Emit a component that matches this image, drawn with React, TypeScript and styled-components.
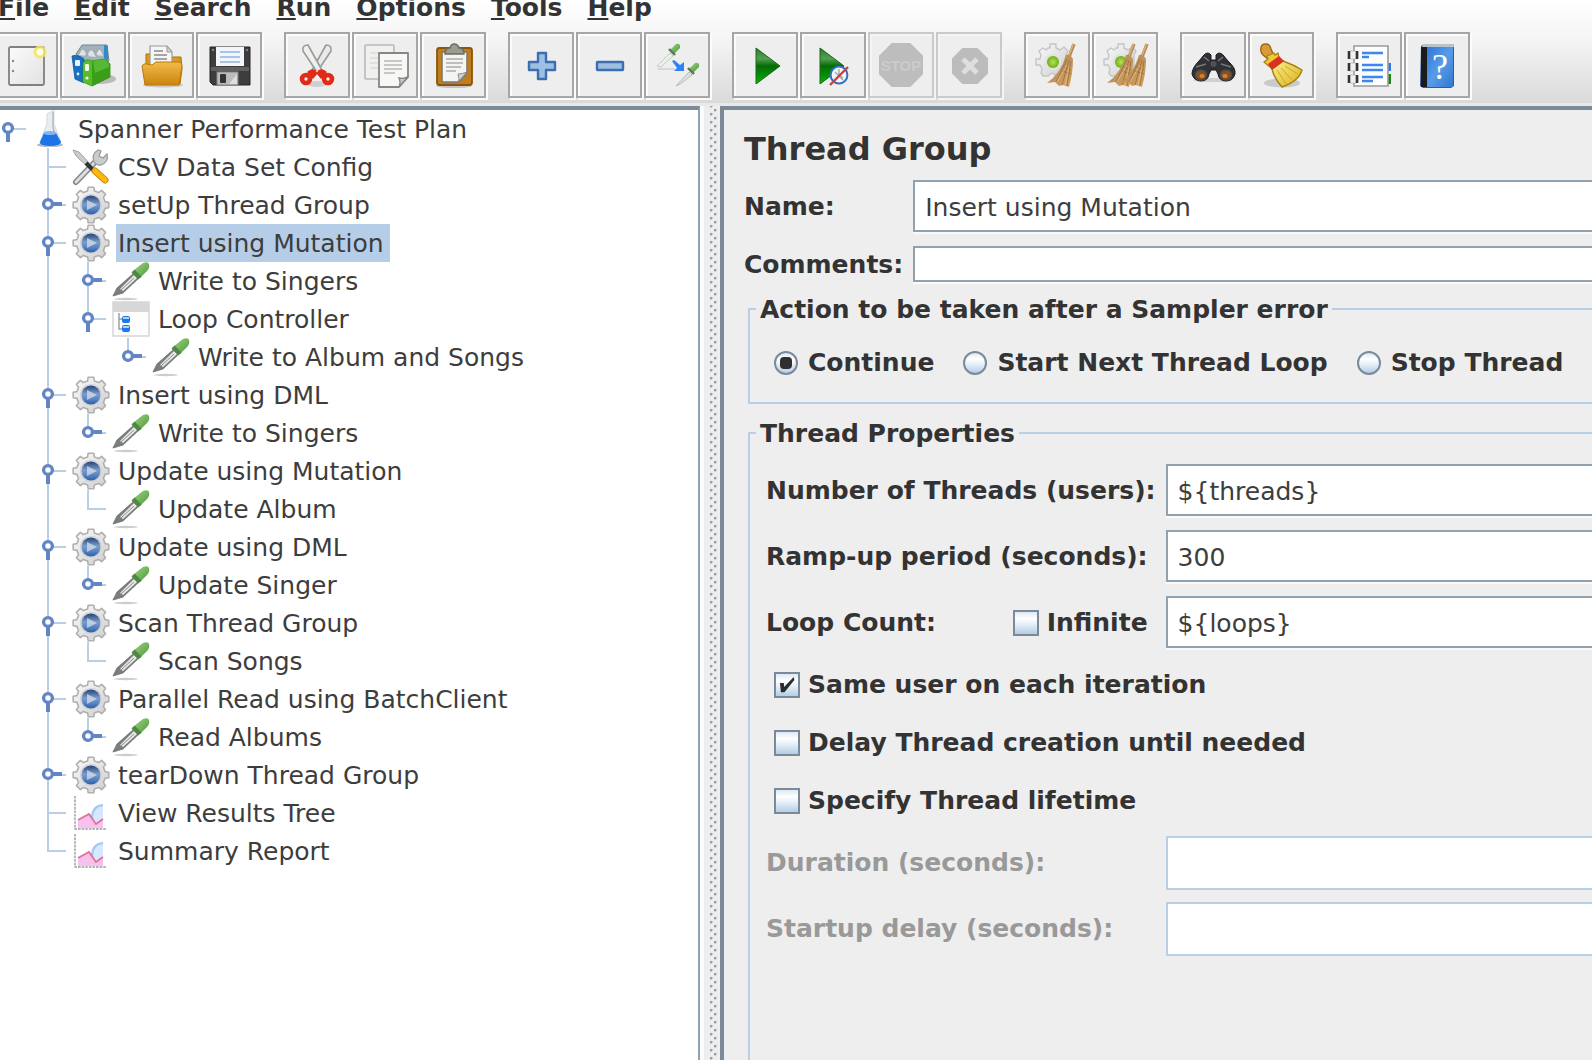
import React from "react";
import styled, { createGlobalStyle, css } from "styled-components";

const color = {
  text: "#333333",
  plain: "#3d3d3d",
  dim: "#999999",
  panel: "#eeeeee",
  edge: "#7a8a99",
  edgeSoft: "#90a1af",
  line: "#b8cfe5",
  handle: "#6385c4",
};

const GlobalStyle = createGlobalStyle`
  * { box-sizing: border-box; }
  body {
    margin: 0;
    background: ${color.panel};
    color: ${color.text};
    font-family: "DejaVu Sans", sans-serif;
    font-size: 25px;
  }
  button, input { font: inherit; color: inherit; }
`;

/* ---------- frame ---------- */

const Frame = styled.div`
  display: flex;
  flex-direction: column;
  height: 100vh;
  overflow: hidden;
`;

const Header = styled.header`
  background: linear-gradient(#ffffff, #f4f4f4 40%, #dadada 97%, #e9e9e9 97%);
`;

const MenuBar = styled.nav`
  display: flex;
  gap: 25px;
  height: 20px;
  margin-left: -2px;
`;

const MenuItem = styled.button`
  padding: 0;
  border: 0;
  background: none;
  font-weight: bold;
  line-height: 16px;
  height: 16px;
  white-space: nowrap;
`;

const Mnemonic = styled.span`
  text-decoration: underline;
  text-decoration-thickness: 2px;
  text-underline-offset: 2px;
`;

const ToolBar = styled.div`
  display: flex;
  gap: 22px;
  margin-left: -8px;
  padding: 12px 0 8px;
`;

const ToolGroup = styled.div`
  display: flex;
  gap: 2px;
`;

const ToolButton = styled.button`
  display: flex;
  align-items: center;
  justify-content: center;
  width: 66px;
  height: 66px;
  padding: 0;
  border: 2px solid #a6a6a6;
  background: ${color.panel};
  box-shadow: inset 2px 2px 0 #fbfbfb, 2px 2px 0 #fbfbfb;
  &:disabled {
    border-color: #cacaca;
    box-shadow: inset 2px 2px 0 #f4f4f4, 2px 2px 0 #f4f4f4;
  }
`;

const ToolSvg = styled.svg`
  width: 44px;
  height: 44px;
  overflow: visible;
`;

const Split = styled.main`
  display: flex;
  flex: 1;
  min-height: 0;
`;

const TreePane = styled.section`
  flex: 0 0 700px;
  overflow: hidden;
  background: #ffffff;
  border-top: 4px solid ${color.edge};
  border-right: 2px solid ${color.edgeSoft};
`;

const Splitter = styled.div`
  flex: 0 0 20px;
  border-left: 4px solid #fbfbfb;
  background-color: ${color.panel};
  background-image:
    radial-gradient(circle at 1px 1px, #93a0ab 1px, transparent 2px),
    radial-gradient(circle at 1px 1px, #93a0ab 1px, transparent 2px);
  background-size: 8px 8px;
  background-repeat: repeat-y;
  background-position: 6px 7px, 10px 11px;
`;

const FormPane = styled.section`
  display: flex;
  flex: 1;
  flex-direction: column;
  min-width: 0;
  overflow: hidden;
  padding: 20px 0 0 20px;
  border-top: 4px solid ${color.edge};
  border-left: 4px solid ${color.edge};
`;

/* ---------- tree ---------- */

const RootList = styled.ul`
  margin: 0;
  padding: 0;
  list-style: none;
`;

const Branch = styled.ul`
  margin: 0;
  padding: 0 0 0 40px;
  list-style: none;
  > li {
    background: linear-gradient(${color.line}, ${color.line}) 7px 0 / 2px 100% no-repeat;
  }
  > li:last-child {
    background-size: 2px 20px;
  }
`;

const Row = styled.div`
  display: flex;
  align-items: center;
  height: 38px;
  white-space: nowrap;
`;

const HandleSvg = styled.svg`
  flex: none;
  width: 32px;
  height: 38px;
`;

const NodeSvg = styled.svg`
  flex: none;
  width: 38px;
  height: 38px;
  margin-right: 6px;
  overflow: visible;
`;

const NodeLabel = styled.span<{ $selected?: boolean }>`
  padding: 2px 6px 0 2px;
  line-height: 36px;
  color: ${color.plain};
  background: ${(p) => (p.$selected ? "#b5cde6" : "transparent")};
`;

/* ---------- form ---------- */

const Title = styled.h1`
  margin: 0 0 12px;
  font-size: 32px;
  line-height: 38px;
`;

const HeadGrid = styled.div`
  display: grid;
  grid-template-columns: max-content 1fr;
  gap: 12px 10px;
  align-items: center;
`;

const FieldGrid = styled(HeadGrid)`
  padding: 16px 0 0 10px;
`;

const FieldLabel = styled.label<{ $dim?: boolean }>`
  font-weight: bold;
  line-height: 30px;
  white-space: nowrap;
  color: ${(p) => (p.$dim ? color.dim : color.text)};
`;

const TextInput = styled.input<{ $compact?: boolean }>`
  width: 100%;
  min-width: 0;
  height: ${(p) => (p.$compact ? "38px" : "54px")};
  padding: 2px 10px 0;
  border: 2px solid ${color.edgeSoft};
  border-right: 0;
  border-radius: 0;
  outline: 0;
  color: ${color.plain};
  background: #ffffff;
  &:enabled {
    height: ${(p) => (p.$compact ? "36px" : "52px")};
    margin-bottom: 2px;
    box-shadow: 0 2px 0 #fafafa;
  }
  &:disabled {
    border-color: ${color.line};
  }
`;

const Group = styled.fieldset<{ $fill?: boolean }>`
  min-width: 0;
  margin: 10px 0 0 4px;
  padding: 0 0 0 6px;
  border: 2px solid ${color.line};
  border-right: 0;
  ${(p) =>
    p.$fill &&
    css`
      flex: 1;
      margin-top: 14px;
      border-bottom: 0;
    `}
`;

const Legend = styled.legend`
  padding: 2px 4px 0;
  font-weight: bold;
  line-height: 28px;
`;

const RadioRow = styled.div`
  display: flex;
  gap: 29px;
  height: 78px;
  padding-left: 18px;
  align-items: center;
  overflow: hidden;
`;

const Choice = styled.label<{ $gap: number }>`
  display: flex;
  flex: none;
  align-items: center;
  gap: ${(p) => p.$gap}px;
  font-weight: bold;
  line-height: 30px;
  white-space: nowrap;
`;

const toggleBase = css`
  display: grid;
  place-items: center;
  flex: none;
  margin: 0;
  appearance: none;
  border: 2px solid ${color.edge};
  background: linear-gradient(#dce9f5, #ffffff 30%, #e6eff8 55%, #b4cde6);
`;

const Radio = styled.input`
  ${toggleBase}
  width: 24px;
  height: 24px;
  border-radius: 50%;
  &:checked::before {
    content: "";
    width: 12px;
    height: 12px;
    border-radius: 4px;
    background: #2f2f2f;
  }
`;

const Check = styled.input`
  ${toggleBase}
  width: 26px;
  height: 26px;
  &:checked::before {
    content: "";
    width: 16px;
    height: 16px;
    background: #2b2b2b;
    clip-path: polygon(6% 38%, 30% 38%, 32% 62%, 92% 0, 96% 18%, 34% 96%, 12% 96%);
  }
`;

const CheckRow = styled.div`
  display: flex;
  grid-column: 1 / -1;
  align-items: center;
  height: 46px;
  padding-left: 8px;
`;

const LoopCell = styled.div`
  display: flex;
  justify-content: space-between;
  padding-right: 8px;
`;

/* ---------- drawings ---------- */

const Definitions = styled.svg`
  position: absolute;
  width: 0;
  height: 0;
`;

function Gradients() {
  return (
    <Definitions aria-hidden="true">
      <defs>
        <linearGradient id="g-metal" x1="0" y1="0" x2="1" y2="1">
          <stop offset="0" stopColor="#fbfbfb" />
          <stop offset="1" stopColor="#cdcdcd" />
        </linearGradient>
        <linearGradient id="g-paper" x1="0" y1="0" x2="1" y2="1">
          <stop offset="0" stopColor="#fbfbfb" />
          <stop offset="1" stopColor="#e2e2e4" />
        </linearGradient>
        <linearGradient id="g-ball" x1="0" y1="0" x2="0" y2="1">
          <stop offset="0" stopColor="#24447c" />
          <stop offset="0.45" stopColor="#7f9cc6" />
          <stop offset="0.7" stopColor="#5b87c4" />
          <stop offset="1" stopColor="#2f5fa6" />
        </linearGradient>
        <linearGradient id="g-play" x1="0" y1="0" x2="0" y2="1">
          <stop offset="0" stopColor="#2c7a2c" />
          <stop offset="0.3" stopColor="#4fa04f" />
          <stop offset="0.5" stopColor="#056b05" />
          <stop offset="1" stopColor="#06b406" />
        </linearGradient>
        <linearGradient id="g-folder" x1="0" y1="0" x2="0" y2="1">
          <stop offset="0" stopColor="#f3bb4a" />
          <stop offset="1" stopColor="#cc8410" />
        </linearGradient>
        <linearGradient id="g-gold" x1="0" y1="0" x2="1" y2="1">
          <stop offset="0" stopColor="#fdf08a" />
          <stop offset="1" stopColor="#d9b01c" />
        </linearGradient>
        <linearGradient id="g-straw" x1="0" y1="0" x2="1" y2="1">
          <stop offset="0" stopColor="#a98058" />
          <stop offset="1" stopColor="#d9a45e" />
        </linearGradient>
        <linearGradient id="g-green" x1="0" y1="0" x2="1" y2="1">
          <stop offset="0" stopColor="#9ad67c" />
          <stop offset="1" stopColor="#4f9440" />
        </linearGradient>
        <linearGradient id="g-book" x1="0" y1="0" x2="1" y2="1">
          <stop offset="0" stopColor="#2f78d8" />
          <stop offset="0.5" stopColor="#5a9be8" />
          <stop offset="1" stopColor="#2f78d0" />
        </linearGradient>
        <radialGradient id="g-lime">
          <stop offset="0" stopColor="#b4e35a" />
          <stop offset="1" stopColor="#6fae14" />
        </radialGradient>
      </defs>
    </Definitions>
  );
}

function gearPath(cx: number, cy: number, outer: number, inner: number, teeth: number) {
  const points: string[] = [];
  const step = (Math.PI * 2) / teeth;
  for (let i = 0; i < teeth; i++) {
    const mid = i * step - Math.PI / 2;
    const corners: [number, number][] = [
      [-0.3, inner],
      [-0.2, outer],
      [0.2, outer],
      [0.3, inner],
    ];
    corners.forEach(([turn, r]) => {
      const a = mid + turn * step;
      points.push(`${(cx + Math.cos(a) * r).toFixed(1)} ${(cy + Math.sin(a) * r).toFixed(1)}`);
    });
  }
  return `M${points.join("L")}Z`;
}

const octagon = (c: number, r: number) => {
  const k = r * 0.42;
  return `M${c - k} ${c - r}H${c + k}L${c + r} ${c - k}V${c + k}L${c + k} ${c + r}H${c - k}L${c - r} ${c + k}V${c - k}Z`;
};

const Broom = ({ x }: { x: number }) => (
  <g transform={`translate(${x} 0)`}>
    <path d="M39 1L34 14" stroke="#b18a58" strokeWidth="3.4" />
    <path d="M38.4 1L33.4 14" stroke="#dcb27a" strokeWidth="1.4" />
    <path d="M31 12Q35 11 38 16Q38 30 34 44L28 42L24 43L20 39L12 40Q26 30 31 12Z" fill="url(#g-straw)" />
    <path d="M32 16L21 39M34 17L27 42M36 18L32 43M29 24L36 27M27 28L36 31" stroke="#94703f" strokeWidth="0.8" fill="none" />
    <path d="M32 22L22 39M34 24L30 42" stroke="#e8c088" strokeWidth="0.8" fill="none" />
  </g>
);

const PaleGear = () => (
  <>
    <path
      d="M13 5L15 5V1H21V5L25 7L29 4L33 8L31 12V26L27 32H20L17 30L13 33H8L6 30L7 26L5 22H1V16H5L6 12L4 8L8 5L11 7Z"
      fill="url(#g-metal)"
      stroke="#c3c5c7"
      strokeWidth="1.4"
      strokeLinejoin="round"
    />
    <circle cx="18" cy="19" r="8" fill="#dfe2df" />
    <circle cx="18" cy="19" r="6" fill="url(#g-lime)" />
  </>
);

const toolIcons: Record<string, React.ReactNode> = {
  fresh: (
    <>
      <rect x="6" y="4" width="35" height="38" rx="1.5" fill="url(#g-paper)" stroke="#80807e" strokeWidth="1.8" />
      <circle cx="10" cy="18" r="1.2" fill="#888" />
      <circle cx="10" cy="28" r="1.2" fill="#888" />
      <circle cx="37" cy="9" r="6.5" fill="#f3e65a" opacity="0.85" />
      <circle cx="37" cy="9" r="3.4" fill="#fffef0" />
    </>
  ),
  templates: (
    <>
      <ellipse cx="30" cy="36" rx="15" ry="5" fill="#bbb" />
      <path d="M5 11L11 2H36L38 18L22 24Z" fill="#9fb2bd" stroke="#6f8898" strokeWidth="1" />
      <path d="M7 12Q12 -1 17 13M15 13Q20 -1 26 14M24 12Q29 -1 33 13" fill="#dfe3e6" stroke="#a3adb3" strokeWidth="2" />
      <path d="M33 2L37 3V18L33 15Z" fill="#2f8ad0" />
      <path d="M1 13Q5 11 10 14L13 16V40L4 36Z" fill="#1673c4" stroke="#0d5799" strokeWidth="0.8" />
      <rect x="4" y="17" width="5" height="6" rx="1" fill="#eaf4fb" />
      <path d="M12 20Q16 15 21 18L34 16L39 21V34L21 43L12 39Z" fill="#3da515" stroke="#2a7d0c" strokeWidth="0.8" />
      <path d="M21 18L34 16L39 21V34L21 43Z" fill="#3a9f18" />
      <path d="M22 18L34 16L38 21V24L24 30Z" fill="#55b934" />
      <path d="M12 20Q16 15 21 18V43L12 39Z" fill="#59bd2b" />
      <rect x="14" y="21" width="4" height="7" rx="1" fill="#f1fae9" />
      <circle cx="16" cy="35" r="1.6" fill="#e9f7df" />
      <circle cx="7" cy="31" r="1.4" fill="#dbeefb" />
    </>
  ),
  open: (
    <>
      <ellipse cx="24" cy="42" rx="20" ry="2.5" fill="#c9c9c9" />
      <path d="M7 11H13L15 14H42L43 26L41 41H7Z" fill="#d99a1e" stroke="#ad7207" strokeWidth="1" />
      <path d="M11 3H28L33 9V24H11Z" fill="#f5f5f5" stroke="#9a9a96" strokeWidth="1.2" />
      <path d="M28 3V9H33Z" fill="#d5d5d5" stroke="#9a9a96" strokeWidth="1" />
      <path d="M15 8H24M15 12H28M15 16H28" stroke="#8b8b8b" strokeWidth="1.3" />
      <path d="M3 23Q4 20 8 21L13 22L17 19H40Q43 19 43 23L40 42H6Z" fill="url(#g-folder)" stroke="#b87a0c" strokeWidth="1" />
    </>
  ),
  save: (
    <>
      <path d="M3 4H43V42H6L3 39Z" fill="#3d3d3d" stroke="#262626" strokeWidth="1" />
      <path d="M4 24H42V28H4Z" fill="#606060" />
      <rect x="9" y="4" width="28" height="19" fill="#f2f6fb" />
      <path d="M13 9H33M13 14H33M13 19H33" stroke="#a6c6e4" strokeWidth="1.8" />
      <rect x="10" y="29" width="21" height="13" fill="#bcbcbc" stroke="#858585" strokeWidth="1" />
      <rect x="13" y="31" width="6" height="9" rx="1" fill="#333" />
      <path d="M22 41L30 31V41Z" fill="#dedede" />
      <circle cx="6" cy="7" r="1" fill="#999" />
      <circle cx="40" cy="7" r="1" fill="#999" />
    </>
  ),
  cut: (
    <>
      <ellipse cx="22" cy="41" rx="10" ry="3" fill="#cfcfcf" />
      <path d="M31 2Q37 2 36 8L20 32L16 29Z" fill="#e9e9e7" stroke="#9a9c99" strokeWidth="1.6" strokeLinejoin="round" />
      <path d="M13 2Q7 2 8 8L24 32L28 29Z" fill="#f0f0ee" stroke="#9a9c99" strokeWidth="1.6" strokeLinejoin="round" />
      <path d="M12 29Q17 24 22 28Q27 24 32 29L26 36L22 31L18 36Z" fill="#de2a16" />
      <ellipse cx="11" cy="36" rx="4" ry="4" fill="#eee" stroke="#e22b16" strokeWidth="4.6" />
      <ellipse cx="33" cy="36" rx="4" ry="4" fill="#eee" stroke="#e22b16" strokeWidth="4.6" />
      <circle cx="22" cy="28" r="1.2" fill="#f7b9b0" />
    </>
  ),
  copy: (
    <>
      <rect x="2" y="2" width="29" height="34" rx="1" fill="#f0f0ee" stroke="#b9bab7" strokeWidth="1.6" />
      <path d="M7 10H26M7 15H26M7 20H26M7 25H20" stroke="#dadada" strokeWidth="1.5" />
      <path d="M16 10H45V34L36 44H16Z" fill="#f7f7f6" stroke="#858783" strokeWidth="1.8" strokeLinejoin="round" />
      <path d="M21 18H39M21 22H39M21 26H39M21 30H32" stroke="#b8b8b8" strokeWidth="1.5" />
      <path d="M45 34Q40 36 36 35Q38 40 36 44Z" fill="#c9c9c7" stroke="#858783" strokeWidth="1.4" />
    </>
  ),
  paste: (
    <>
      <ellipse cx="23" cy="43" rx="18" ry="2" fill="#c4c4c4" />
      <rect x="6" y="5" width="35" height="37" rx="2.5" fill="#c07d1c" stroke="#8a560b" strokeWidth="1.8" />
      <path d="M11 9H36V30L28 39H11Z" fill="#f4f4f2" stroke="#7d7a70" strokeWidth="1.6" />
      <path d="M36 29Q31 31 27 31Q29 36 27 39Z" fill="#d4d4d2" stroke="#8a8a88" strokeWidth="1" />
      <path d="M15 16H32M15 20H32M15 24H30M15 28H25" stroke="#aaaaaa" strokeWidth="1.5" />
      <path d="M14 11Q14 5 19 5Q20 1 23 1Q27 1 28 5Q33 5 33 11Z" fill="#9b9c90" stroke="#6b6c62" strokeWidth="1.4" />
    </>
  ),
  plus: (
    <path d="M19 10H27V19H36V27H27V36H19V27H10V19H19Z" fill="#9dbfe2" stroke="#3b6fb0" strokeWidth="2.4" strokeLinejoin="round" />
  ),
  minus: (
    <rect x="10" y="19" width="26" height="8" rx="0.5" fill="#9dbfe2" stroke="#3b6fb0" strokeWidth="2.4" strokeLinejoin="round" />
  ),
  toggle: (
    <>
      <path d="M2 23L15 10L18 13L6 24Z" fill="#eceeec" stroke="#c6c9c6" strokeWidth="1" />
      <path d="M3 26H20" stroke="#cdcdcd" strokeWidth="1.4" />
      <path d="M16 6L21 1Q26 0 25 5L20 10Q15 11 16 6Z" fill="url(#g-green)" />
      <path d="M14 6L20 12" stroke="#55794c" strokeWidth="2.4" />
      <path d="M21 43L34 29L37 32L25 41Z" fill="#dfe1df" stroke="#b7bab7" strokeWidth="1" />
      <path d="M35 25L40 20Q45 19 44 24L39 29Q34 30 35 25Z" fill="url(#g-green)" />
      <path d="M33 25L39 31" stroke="#55794c" strokeWidth="2.4" />
      <path d="M17 18L19 17L25 22L29 19V28H19L22 25Z" fill="#2f82f5" />
    </>
  ),
  start: <path d="M13 5L37 23L13 41Z" fill="url(#g-play)" stroke="#1c661c" strokeWidth="1" />,
  startNoPause: (
    <>
      <path d="M9 5L33 23L9 41Z" fill="url(#g-play)" stroke="#1c661c" strokeWidth="1" />
      <circle cx="28" cy="32" r="8.4" fill="#f2f5fa" stroke="#2f6fc0" strokeWidth="2" />
      <path d="M28 26V32L32 35M24 29L32 37" stroke="#9ab" strokeWidth="1.4" fill="none" />
      <path d="M19 42L37 24" stroke="#e0392c" strokeWidth="2.4" />
    </>
  ),
  stop: (
    <>
      <path d={octagon(22, 22)} fill="#bdbdbd" />
      <text x="22" y="28" textAnchor="middle" fontSize="15" fontWeight="bold" fontFamily="Liberation Sans, sans-serif" fill="#cbcbcb">
        STOP
      </text>
    </>
  ),
  shutdown: (
    <>
      <path d={octagon(23, 18)} fill="#bcbcbc" />
      <path d="M16 16L30 30M30 16L16 30" stroke="#dedede" strokeWidth="5" />
    </>
  ),
  clear: (
    <>
      <PaleGear />
      <Broom x={0} />
    </>
  ),
  clearAll: (
    <>
      <PaleGear />
      <Broom x={-8} />
      <Broom x={5} />
    </>
  ),
  search: (
    <>
      <ellipse cx="22" cy="37" rx="20" ry="2" fill="#cfcfcf" />
      <path d="M13 12Q17 8 20 12V17H25V12Q28 8 32 12L37 18Q45 25 44 31Q42 38 35 38Q28 38 27 31L25 27H20L18 31Q17 38 10 38Q3 38 1 31Q1 25 8 18Z" fill="#2f3134" stroke="#1b1b1d" strokeWidth="1" />
      <path d="M13 14L18 18M32 14L27 18M5 24L15 21M40 24L30 21" stroke="#73787d" strokeWidth="1.6" />
      <circle cx="22.5" cy="21" r="3" fill="#4e5358" />
      <ellipse cx="10" cy="32" rx="5.5" ry="5" fill="#8f4d18" stroke="#4a4d50" strokeWidth="1.6" />
      <ellipse cx="35" cy="32" rx="5.5" ry="5" fill="#8f4d18" stroke="#4a4d50" strokeWidth="1.6" />
      <ellipse cx="11" cy="33" rx="2.6" ry="2" fill="#cf8338" />
      <ellipse cx="34" cy="33" rx="2.6" ry="2" fill="#cf8338" />
    </>
  ),
  searchReset: (
    <>
      <ellipse cx="23" cy="40" rx="18" ry="4.5" fill="#c9c9c9" />
      <path d="M2 5Q2 1 7 1Q11 1 12 6L15 13L9 16L4 12Q1 9 2 5Z" fill="#d99a3c" stroke="#9d6a12" strokeWidth="1.4" />
      <path d="M5 19L9 16L8 13L15 10L16 12L19 10L20 15L12 25Z" fill="#efc93a" stroke="#a57f0b" strokeWidth="1.2" />
      <path d="M13 26L24 18Q35 22 43 27Q40 38 23 44Q15 35 13 26Z" fill="url(#g-gold)" stroke="#a5830f" strokeWidth="1.4" />
      <path d="M9 21L20 13L25 18L13 27Z" fill="#d93222" />
      <path d="M18 27L27 41M22 25L33 37M26 23L39 31" stroke="#cfa824" strokeWidth="1" />
    </>
  ),
  helper: (
    <>
      <path d="M40 20H44V28H40Z" fill="#2b7cf0" />
      <path d="M40 31H44V41H40Z" fill="#158a15" />
      <path d="M7 3H41V43H7Z" fill="#fdfdfd" stroke="#9a9a9a" strokeWidth="1.6" />
      {[12, 24, 36].map((y) => (
        <g key={y}>
          <rect x="2" y={y - 4} width="9" height="8" rx="2" fill="#f0f0f0" stroke="#bbb" strokeWidth="0.8" />
          <path d={`M2 ${y - 4}V${y + 4}M10 ${y - 4}V${y + 4}`} stroke="#333" strokeWidth="2.6" />
        </g>
      ))}
      <path d="M15 10H36M15 14H22M15 22H36M15 27H36M15 34H36M15 38H26" stroke="#3f86f0" strokeWidth="2.4" />
    </>
  ),
  help: (
    <>
      <path d="M6 3L9 1H39V43L36 45H8L5 43Z" fill="#2a5f9f" />
      <path d="M12 4H38V44H12Z" fill="url(#g-book)" />
      <path d="M8 1H39V4H7Z" fill="#b9c3ca" />
      <path d="M6 4H12V44H6Z" fill="#1b1b1b" />
      <text x="25" y="36" textAnchor="middle" fontSize="36" fontFamily="Liberation Serif, serif" fill="#ffffff">
        ?
      </text>
    </>
  ),
};

type NodeKind = "plan" | "config" | "threads" | "sampler" | "loop" | "listener";

const nodeIcons: Record<NodeKind, React.ReactNode> = {
  plan: (
    <>
      <ellipse cx="18" cy="35" rx="13" ry="2" fill="#8f9499" opacity="0.7" />
      <path d="M15 4L22 0V14L29 32Q29 36 18 36Q7 36 8 32L15 14Z" fill="#e9edf0" stroke="#d3d9dd" strokeWidth="1" />
      <path d="M12 23H24L29 32Q29 36 18 36Q7 36 8 32Z" fill="#1b74e8" />
      <ellipse cx="18" cy="23" rx="6.4" ry="2" fill="#7fb4f5" />
      <path d="M21 2V18L23 24" stroke="#a8b0b6" strokeWidth="1.2" fill="none" />
    </>
  ),
  config: (
    <>
      <path d="M4 34L24 13" stroke="#85888b" strokeWidth="6" strokeLinecap="round" />
      <path d="M4 34L24 13" stroke="#dcdedf" strokeWidth="3" strokeLinecap="round" />
      <path d="M22 14Q19 6 26 2L29 3L27 8L31 10L35 6Q37 14 29 17Q25 18 22 14Z" fill="#c9cbcc" stroke="#96999b" strokeWidth="1.2" />
      <path d="M1 2L7 4L20 18L18 21L4 8Z" fill="#c9cbcc" stroke="#a3a6a8" strokeWidth="1" />
      <path d="M14 15L21 22" stroke="#2f3234" strokeWidth="4" />
      <path d="M23 23L33 32" stroke="#c98d08" strokeWidth="7" strokeLinecap="round" />
      <path d="M23 23L33 32" stroke="#fcb911" strokeWidth="5" strokeLinecap="round" />
    </>
  ),
  threads: (
    <>
      <path d={gearPath(19, 19, 18, 14.5, 8)} fill="url(#g-metal)" stroke="#b0b0b0" strokeWidth="1.6" strokeLinejoin="round" />
      <circle cx="19" cy="19" r="11" fill="#d0d3d8" />
      <circle cx="19" cy="19" r="9.4" fill="url(#g-ball)" />
      <path d="M15 14L25 19L15 24Z" fill="#d3deed" opacity="0.75" />
    </>
  ),
  sampler: (
    <>
      <ellipse cx="14" cy="37" rx="12" ry="1.2" fill="#cccccc" />
      <path d="M1 34L5 26L22 11L27 16L11 31Z" fill="#7b7f7c" stroke="#696c6a" strokeWidth="0.8" />
      <path d="M8 27L22 13L25 16L11 29Z" fill="#e9ebe9" />
      <path d="M9 28L22 16" stroke="#888c89" strokeWidth="1" />
      <path d="M22 8L31 1Q36 -1 37 2Q38 6 35 9L28 16Z" fill="url(#g-green)" />
      <path d="M21 9L28 16" stroke="#4f8746" strokeWidth="4.4" />
    </>
  ),
  loop: (
    <>
      <rect x="1" y="2" width="36" height="34" fill="#fdfdfd" stroke="#d9d9d9" strokeWidth="1.6" />
      <rect x="1" y="2" width="36" height="10" fill="#d7d7d7" />
      <path d="M7 13V29H11M7 19H11" stroke="#9a9a9a" strokeWidth="1.4" fill="none" />
      <rect x="10" y="16" width="8" height="7" rx="2" fill="#1f78ea" />
      <rect x="10" y="25" width="8" height="7" rx="2" fill="#1f78ea" />
      <path d="M11 17H17V19H11ZM11 26H17V28H11Z" fill="#a9d2fa" />
    </>
  ),
  listener: (
    <>
      <path d="M3 2V35H34" stroke="#9b9b9b" strokeWidth="1.4" fill="none" strokeDasharray="2.6 1" />
      <path d="M31 11Q20 12 20 24L26 30L31 25Z" fill="#d6e8fd" />
      <path d="M31 11Q20 12 20 24" stroke="#9fc8f6" strokeWidth="2" fill="none" />
      <path d="M6 26L17 20L24 30L31 25V34H6Z" fill="#f8c0ee" />
      <path d="M6 26L17 20L24 30L31 25" stroke="#e0709a" strokeWidth="1.8" fill="none" />
    </>
  ),
};

type HandleState = "open" | "closed" | "leaf";

function Handle({ state }: { state: HandleState }) {
  return (
    <HandleSvg viewBox="0 0 32 38" aria-hidden="true">
      <path d="M8 19H26" stroke={color.line} strokeWidth="2" />
      {state === "open" && <path d="M8 22V32" stroke={color.handle} strokeWidth="4" />}
      {state === "closed" && <path d="M12 18H22" stroke={color.handle} strokeWidth="4" />}
      {state !== "leaf" && <circle cx="8" cy="18" r="4.4" fill="#ffffff" stroke={color.handle} strokeWidth="3.4" />}
    </HandleSvg>
  );
}

/* ---------- data ---------- */

interface PlanNode {
  label: string;
  kind: NodeKind;
  handle: HandleState;
  selected?: boolean;
  children?: PlanNode[];
}

const sampler = (label: string, handle: HandleState = "closed"): PlanNode => ({ label, kind: "sampler", handle });

const plan: PlanNode = {
  label: "Spanner Performance Test Plan",
  kind: "plan",
  handle: "open",
  children: [
    { label: "CSV Data Set Config", kind: "config", handle: "leaf" },
    { label: "setUp Thread Group", kind: "threads", handle: "closed" },
    {
      label: "Insert using Mutation",
      kind: "threads",
      handle: "open",
      selected: true,
      children: [
        sampler("Write to Singers"),
        { label: "Loop Controller", kind: "loop", handle: "open", children: [sampler("Write to Album and Songs")] },
      ],
    },
    { label: "Insert using DML", kind: "threads", handle: "open", children: [sampler("Write to Singers")] },
    { label: "Update using Mutation", kind: "threads", handle: "open", children: [sampler("Update Album", "leaf")] },
    { label: "Update using DML", kind: "threads", handle: "open", children: [sampler("Update Singer")] },
    { label: "Scan Thread Group", kind: "threads", handle: "open", children: [sampler("Scan Songs", "leaf")] },
    { label: "Parallel Read using BatchClient", kind: "threads", handle: "open", children: [sampler("Read Albums")] },
    { label: "tearDown Thread Group", kind: "threads", handle: "closed" },
    { label: "View Results Tree", kind: "listener", handle: "leaf" },
    { label: "Summary Report", kind: "listener", handle: "leaf" },
  ],
};

const menus = ["File", "Edit", "Search", "Run", "Options", "Tools", "Help"];

const tools: { icon: string; name: string; disabled?: boolean }[][] = [
  [
    { icon: "fresh", name: "New" },
    { icon: "templates", name: "Templates" },
    { icon: "open", name: "Open" },
    { icon: "save", name: "Save" },
  ],
  [
    { icon: "cut", name: "Cut" },
    { icon: "copy", name: "Copy" },
    { icon: "paste", name: "Paste" },
  ],
  [
    { icon: "plus", name: "Expand All" },
    { icon: "minus", name: "Collapse All" },
    { icon: "toggle", name: "Toggle" },
  ],
  [
    { icon: "start", name: "Start" },
    { icon: "startNoPause", name: "Start no pauses" },
    { icon: "stop", name: "Stop", disabled: true },
    { icon: "shutdown", name: "Shutdown", disabled: true },
  ],
  [
    { icon: "clear", name: "Clear" },
    { icon: "clearAll", name: "Clear All" },
  ],
  [
    { icon: "search", name: "Search" },
    { icon: "searchReset", name: "Reset Search" },
  ],
  [
    { icon: "helper", name: "Function Helper" },
    { icon: "help", name: "Help" },
  ],
];

/* ---------- views ---------- */

function TreeItem({ node }: { node: PlanNode }) {
  return (
    <li>
      <Row>
        <Handle state={node.handle} />
        <NodeSvg viewBox="0 0 38 38" fill="none" aria-hidden="true">
          {nodeIcons[node.kind]}
        </NodeSvg>
        <NodeLabel $selected={node.selected}>{node.label}</NodeLabel>
      </Row>
      {node.children && (
        <Branch>
          {node.children.map((child) => (
            <TreeItem key={child.label} node={child} />
          ))}
        </Branch>
      )}
    </li>
  );
}

function CheckChoice({ label, checked }: { label: string; checked?: boolean }) {
  return (
    <Choice $gap={8}>
      <Check type="checkbox" defaultChecked={checked} />
      {label}
    </Choice>
  );
}

function Field({ id, label, value, disabled }: { id: string; label: string; value?: string; disabled?: boolean }) {
  return (
    <>
      <FieldLabel htmlFor={id} $dim={disabled}>
        {label}
      </FieldLabel>
      <TextInput id={id} type="text" defaultValue={value} disabled={disabled} />
    </>
  );
}

export default function App() {
  return (
    <Frame>
      <GlobalStyle />
      <Gradients />
      <Header>
        <MenuBar>
          {menus.map((name) => (
            <MenuItem key={name} type="button">
              <Mnemonic>{name[0]}</Mnemonic>
              {name.slice(1)}
            </MenuItem>
          ))}
        </MenuBar>
        <ToolBar role="toolbar">
          {tools.map((group) => (
            <ToolGroup key={group[0].icon}>
              {group.map((tool) => (
                <ToolButton key={tool.icon} type="button" aria-label={tool.name} disabled={tool.disabled}>
                  <ToolSvg viewBox="0 0 44 44" fill="none" aria-hidden="true">
                    {toolIcons[tool.icon]}
                  </ToolSvg>
                </ToolButton>
              ))}
            </ToolGroup>
          ))}
        </ToolBar>
      </Header>
      <Split>
        <TreePane>
          <RootList>
            <TreeItem node={plan} />
          </RootList>
        </TreePane>
        <Splitter role="separator" aria-orientation="vertical" />
        <FormPane>
          <Title>Thread Group</Title>
          <HeadGrid>
            <Field id="name" label="Name:" value="Insert using Mutation" />
            <FieldLabel htmlFor="comments">Comments:</FieldLabel>
            <TextInput id="comments" type="text" $compact />
          </HeadGrid>
          <Group>
            <Legend>Action to be taken after a Sampler error</Legend>
            <RadioRow>
              {["Continue", "Start Next Thread Loop", "Stop Thread"].map((label, i) => (
                <Choice key={label} $gap={10}>
                  <Radio type="radio" name="on-error" defaultChecked={i === 0} />
                  {label}
                </Choice>
              ))}
              <Radio type="radio" name="on-error" aria-label="Stop Test" />
            </RadioRow>
          </Group>
          <Group $fill>
            <Legend>Thread Properties</Legend>
            <FieldGrid>
              <Field id="threads" label="Number of Threads (users):" value="${threads}" />
              <Field id="ramp" label="Ramp-up period (seconds):" value="300" />
              <LoopCell>
                <FieldLabel htmlFor="loops">Loop Count:</FieldLabel>
                <CheckChoice label="Infinite" />
              </LoopCell>
              <TextInput id="loops" type="text" defaultValue="${loops}" />
              <CheckRow>
                <CheckChoice label="Same user on each iteration" checked />
              </CheckRow>
              <CheckRow>
                <CheckChoice label="Delay Thread creation until needed" />
              </CheckRow>
              <CheckRow>
                <CheckChoice label="Specify Thread lifetime" />
              </CheckRow>
              <Field id="duration" label="Duration (seconds):" disabled />
              <Field id="delay" label="Startup delay (seconds):" disabled />
            </FieldGrid>
          </Group>
        </FormPane>
      </Split>
    </Frame>
  );
}
